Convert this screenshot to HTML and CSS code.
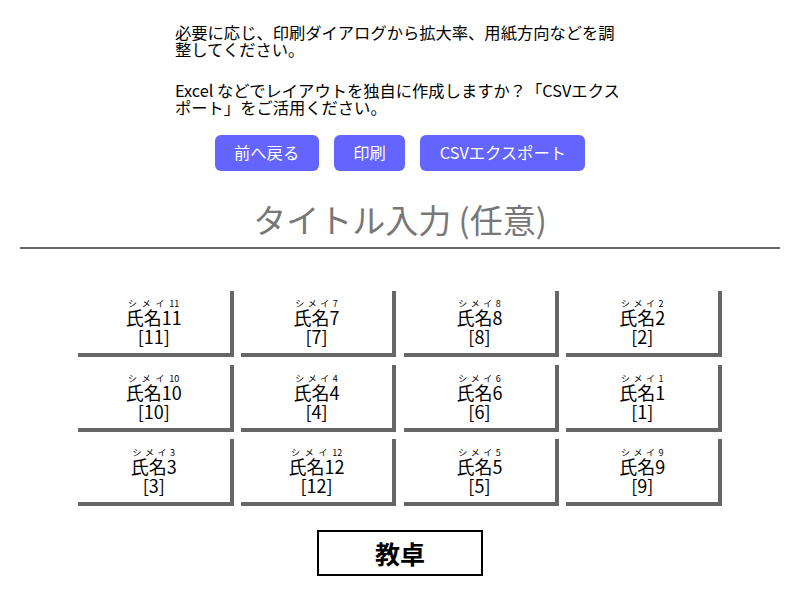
FILE: index.html
```html
<!DOCTYPE html>
<html lang="ja">
<head>
<meta charset="utf-8">
<title>座席表</title>
<link rel="stylesheet" href="styles.css">
</head>
<body>
<main class="page">
  <section class="notice">
    <p>必要に応じ、印刷ダイアログから拡大率、用紙方向などを調整してください。</p>
    <p>Excel などでレイアウトを独自に作成しますか？「CSVエクスポート」をご活用ください。</p>
  </section>
  <nav class="actions">
    <button class="btn" type="button">前へ戻る</button>
    <button class="btn" type="button">印刷</button>
    <button class="btn" type="button">CSVエクスポート</button>
  </nav>
  <input class="title" type="text" placeholder="タイトル入力 (任意)">
  <section class="seats">
    <div class="seat"><span class="name"><ruby>氏名11<rt>シメイ11</rt></ruby></span><span class="num">[11]</span></div>
    <div class="seat"><span class="name"><ruby>氏名7<rt>シメイ7</rt></ruby></span><span class="num">[7]</span></div>
    <div class="seat"><span class="name"><ruby>氏名8<rt>シメイ8</rt></ruby></span><span class="num">[8]</span></div>
    <div class="seat"><span class="name"><ruby>氏名2<rt>シメイ2</rt></ruby></span><span class="num">[2]</span></div>
    <div class="seat"><span class="name"><ruby>氏名10<rt>シメイ10</rt></ruby></span><span class="num">[10]</span></div>
    <div class="seat"><span class="name"><ruby>氏名4<rt>シメイ4</rt></ruby></span><span class="num">[4]</span></div>
    <div class="seat"><span class="name"><ruby>氏名6<rt>シメイ6</rt></ruby></span><span class="num">[6]</span></div>
    <div class="seat"><span class="name"><ruby>氏名1<rt>シメイ1</rt></ruby></span><span class="num">[1]</span></div>
    <div class="seat"><span class="name"><ruby>氏名3<rt>シメイ3</rt></ruby></span><span class="num">[3]</span></div>
    <div class="seat"><span class="name"><ruby>氏名12<rt>シメイ12</rt></ruby></span><span class="num">[12]</span></div>
    <div class="seat"><span class="name"><ruby>氏名5<rt>シメイ5</rt></ruby></span><span class="num">[5]</span></div>
    <div class="seat"><span class="name"><ruby>氏名9<rt>シメイ9</rt></ruby></span><span class="num">[9]</span></div>
  </section>
  <div class="desk">教卓</div>
</main>
</body>
</html>
```

FILE: styles.css
```css
html, body {
  margin: 0;
  padding: 0;
  background: #fff;
}

body {
  font-family: "Noto Sans CJK JP", "Noto Sans", sans-serif;
  color: #000;
}

.page {
  padding: 24px 20px 0;
  display: flex;
  flex-direction: column;
  align-items: center;
}

.notice {
  width: 450px;
  font-size: 16.3px;
  line-height: 17px;
}

.notice p {
  margin: 0;
}

.notice p + p {
  margin-top: 23.5px;
}

.actions {
  margin-top: 19px;
  display: flex;
  gap: 15px;
  justify-content: center;
}

.btn {
  font-family: "Noto Sans CJK JP", "Noto Sans", sans-serif;
  font-size: 16.3px;
  line-height: 19px;
  height: 36px;
  padding: 0 19.5px;
  border: none;
  border-radius: 6px;
  background: #6464ff;
  color: #fff;
}

.title {
  display: block;
  box-sizing: border-box;
  width: 760px;
  height: 58px;
  margin: 20px 0 0;
  padding: 3px 0 3px;
  border: none;
  border-bottom: 2px solid #666;
  outline: none;
  background: transparent;
  font-family: "Noto Sans CJK JP", "Noto Sans", sans-serif;
  font-size: 33px;
  line-height: 48px;
  text-align: center;
  color: #000;
}

.title::placeholder {
  color: #777;
}

.seats {
  margin-top: 42px;
  display: grid;
  grid-template-columns: repeat(4, 155.5px);
  grid-auto-rows: 66.7px;
  column-gap: 7.33px;
  row-gap: 7.8px;
}

.seat {
  box-sizing: border-box;
  border-right: 4px solid #666;
  border-bottom: 4px solid #666;
  display: flex;
  flex-direction: column;
  align-items: center;
  justify-content: center;
  text-align: center;
  font-size: 18px;
  line-height: 19px;
  padding-top: 2px;
}

.name {
  display: block;
}

.name rt {
  font-size: 9px;
  line-height: 10px;
}

.num {
  display: block;
}

.desk {
  margin-top: 24px;
  box-sizing: border-box;
  width: 166px;
  height: 46px;
  border: 2px solid #000;
  display: flex;
  align-items: center;
  justify-content: center;
  font-size: 25px;
  font-weight: bold;
}
```
